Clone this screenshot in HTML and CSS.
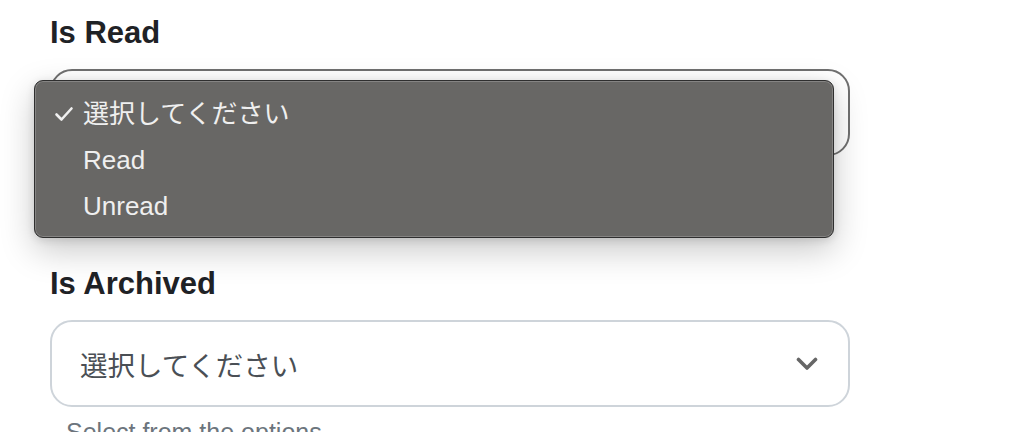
FILE: index.html
```html
<!DOCTYPE html>
<html lang="ja">
<head>
  <meta charset="UTF-8">
  <meta name="viewport" content="width=device-width, initial-scale=1">
  <title>Filters</title>
  <link rel="stylesheet" href="styles.css">
</head>
<body>
  <div class="form">
    <div class="field">
      <label class="field-label">Is Read</label>
      <div class="select open">
        <span class="select-value"></span>
        <ul class="menu">
          <li class="menu-item">
            <svg class="check" width="20" height="16" viewBox="0 0 20 16">
              <path d="M2.5 8.5 L7.5 13.5 L17.5 2.5" fill="none" stroke="#f0f0f0" stroke-width="2.6" stroke-linecap="round" stroke-linejoin="round"/>
            </svg><span class="menu-text cjk">選択してください</span></li>
          <li class="menu-item"><span class="check"></span><span class="menu-text">Read</span></li>
          <li class="menu-item"><span class="check"></span><span class="menu-text">Unread</span></li>
        </ul>
      </div>
      <p class="help">Select from the options</p>
    </div>

    <div class="field">
      <label class="field-label">Is Archived</label>
      <div class="select">
        <span class="select-value">選択してください</span>
        <svg class="chevron" width="22" height="14" viewBox="0 0 22 14">
          <path d="M2.5 2.5 L11 11 L19.5 2.5" fill="none" stroke="#666" stroke-width="3.6" stroke-linecap="round" stroke-linejoin="round"/>
        </svg>
      </div>
      <p class="help">Select from the options</p>
    </div>
  </div>
</body>
</html>
```

FILE: styles.css
```css
* { margin: 0; padding: 0; box-sizing: border-box; }
body {
  font-family: 'Liberation Sans', 'Noto Sans CJK JP', sans-serif;
  background: #ffffff;
  color: #212529;
  overflow: hidden;
}
.form { width: 800px; margin-left: 50px; padding-top: 15px; }
.field { margin-bottom: 70px; }
.field-label { display: block; font-size: 31px; line-height: 36px; font-weight: bold; color: #1f2226; margin-bottom: 18px; }
.select { position: relative; height: 87px; border: 2px solid #ced4da; border-radius: 22px; display: flex; align-items: center; justify-content: space-between; padding: 0 30px 0 28px; background: #fff; }
.select.open { border-color: #707070; }
.select-value { font-size: 27.5px; color: #4a4f55; }
.chevron { display: block; }
.help { font-size: 25px; line-height: 30px; color: #6c757d; margin-top: 10px; padding-left: 16px; }

/* open dropdown list */
.menu { position: absolute; left: -18px; top: 9px; width: 800px; height: 158px; list-style: none; padding: 10px 0; background: #686765; border: 1px solid #2f2f2f; border-radius: 9px; box-shadow: inset 0 0 0 1px #858483, 0 12px 34px rgba(0, 0, 0, 0.22), 0 2px 8px rgba(0, 0, 0, 0.12); z-index: 2; }
.menu-item { display: flex; align-items: center; height: 46px; font-size: 26px; color: #efefef; padding-left: 19px; }
.menu-text { padding-left: 1px; }
.menu-text.cjk { margin-top: -5px; }
.check { display: block; width: 20px; height: 16px; margin-right: 8px; flex: none; }
```
